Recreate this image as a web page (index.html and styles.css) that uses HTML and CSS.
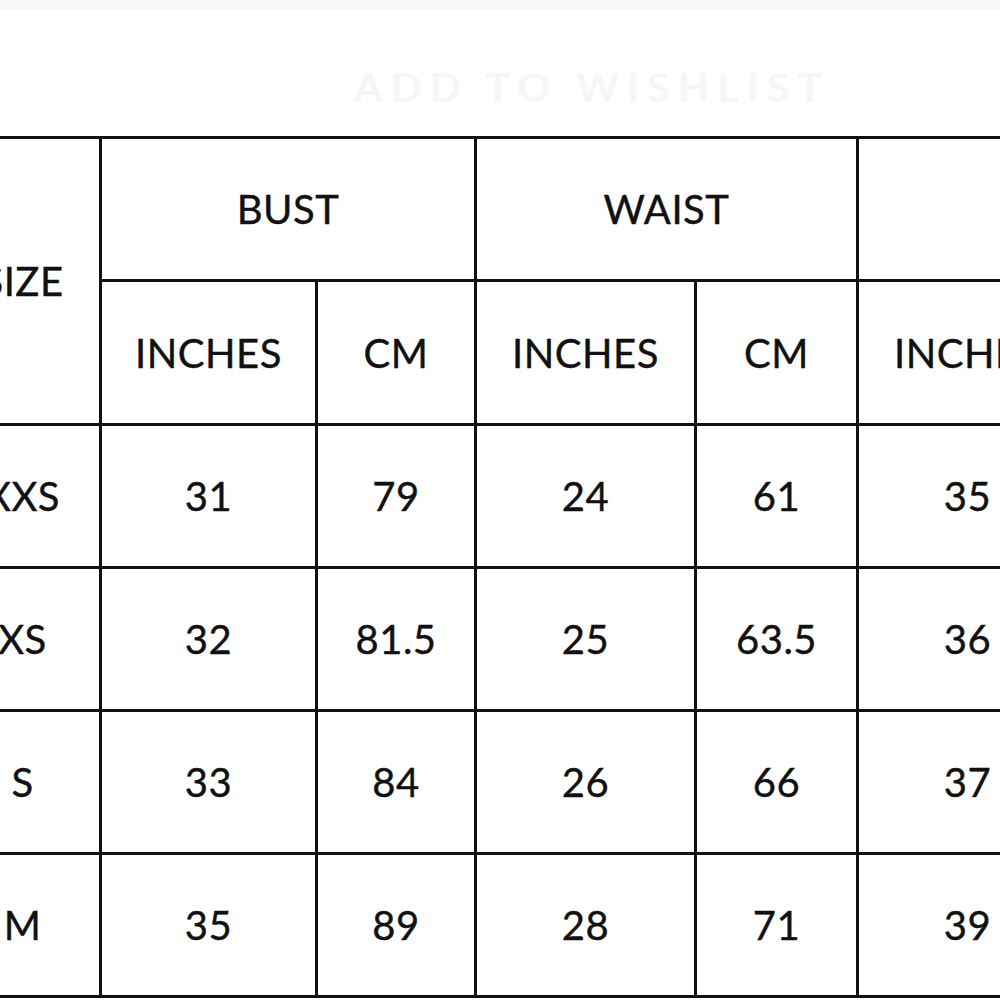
FILE: index.html
```html
<!DOCTYPE html>
<html>
<head>
<meta charset="utf-8">
<link rel="stylesheet" href="styles.css">
</head>
<body>
<div class="page">
  <div class="topband"></div>
  <div class="wish"><span class="wish-text">ADD TO WISHLIST</span></div>
  <table class="chart">
    <colgroup>
      <col class="c-size"><col class="c-in"><col class="c-cm"><col class="c-in2"><col class="c-cm2"><col class="c-in3"><col class="c-cm3">
    </colgroup>
    <thead>
      <tr class="r-head1">
        <th rowspan="2">SIZE</th>
        <th colspan="2">BUST</th>
        <th colspan="2">WAIST</th>
        <th colspan="2">HIPS</th>
      </tr>
      <tr class="r-head2">
        <th>INCHES</th><th>CM</th><th>INCHES</th><th>CM</th><th>INCHES</th><th>CM</th>
      </tr>
    </thead>
    <tbody>
      <tr><td>XXS</td><td>31</td><td>79</td><td>24</td><td>61</td><td>35</td><td>89</td></tr>
      <tr><td>XS</td><td>32</td><td>81.5</td><td>25</td><td>63.5</td><td>36</td><td>91.5</td></tr>
      <tr><td>S</td><td>33</td><td>84</td><td>26</td><td>66</td><td>37</td><td>94</td></tr>
      <tr><td>M</td><td>35</td><td>89</td><td>28</td><td>71</td><td>39</td><td>99</td></tr>
    </tbody>
  </table>
</div>
</body>
</html>
```
FILE: styles.css
```css
html, body {
  margin: 0;
  padding: 0;
  background: #ffffff;
  overflow: hidden;
}
.page {
  width: 1000px;
  height: 1000px;
  overflow: hidden;
  font-family: "Lato", "Liberation Sans", sans-serif;
  color: #111111;
}
.topband {
  height: 10px;
  background: #f9f9f9;
}
.wish {
  height: 126px;
  display: flex;
  align-items: center;
  padding-left: 354px;
  box-sizing: border-box;
  padding-top: 26px;
}
.wish-text {
  font-size: 41px;
  font-weight: 700;
  letter-spacing: 8px;
  color: #f6f6f6;
  white-space: nowrap;
}
.chart {
  border-collapse: collapse;
  table-layout: fixed;
  margin-left: -57px;
  width: 1294px;
}
.c-size { width: 156px; }
.c-in { width: 216px; }
.c-cm { width: 159px; }
.c-in2 { width: 220px; }
.c-cm2 { width: 162px; }
.c-in3 { width: 220px; }
.c-cm3 { width: 161px; }
.chart th, .chart td {
  border: 3px solid #111111;
  padding: 0;
  text-align: center;
  vertical-align: middle;
  font-size: 40px;
  font-weight: 400;
  letter-spacing: 0.5px;
  -webkit-text-stroke: 0.4px #111111;
  height: 143px;
  box-sizing: border-box;
}
.r-head1 th { height: 143px; }
.r-head2 th { height: 144px; }
```
